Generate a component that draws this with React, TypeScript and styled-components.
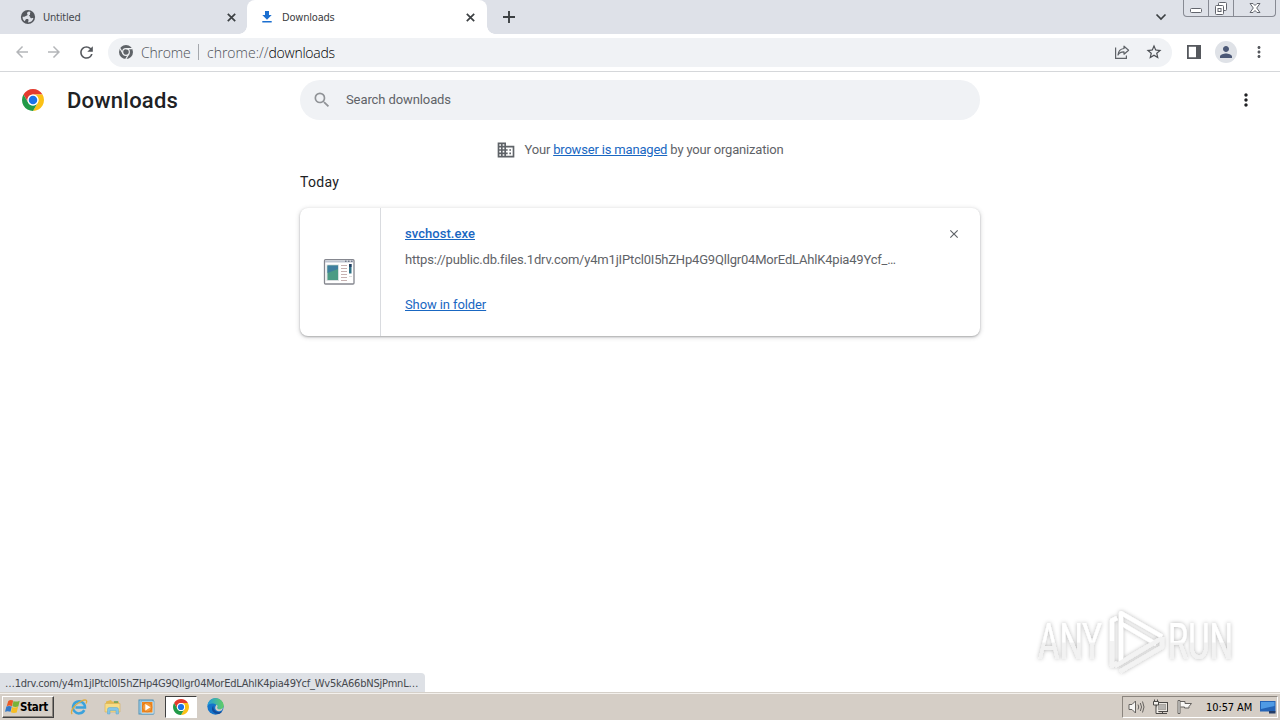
import React from "react";
import styled, { createGlobalStyle } from "styled-components";
import { MdArrowBack, MdArrowForward, MdRefresh, MdStarBorder, MdSearch, MdDomain, MdMoreVert, MdClose, MdPerson } from "react-icons/md";

const UI = `"DejaVu Sans Condensed", "DejaVu Sans", sans-serif`;
const LIGHT = `"Open Sans", sans-serif`;

const GlobalStyle = createGlobalStyle`
  * { box-sizing: border-box; }
  body { margin: 0; background: #fff; overflow: hidden; font-family: Roboto, sans-serif; }
  svg { display: block; flex: none; }
`;

const Screen = styled.div`
  position: relative;
  width: 1280px;
  height: 720px;
  display: flex;
  flex-direction: column;
  background: #fff;
`;

const Text = styled.span<{ $size: number; $color?: string; $spacing?: number; $weight?: number; $font?: string }>`
  font-family: ${(p) => p.$font ?? "Roboto, sans-serif"};
  font-size: ${(p) => p.$size}px;
  font-weight: ${(p) => p.$weight ?? 400};
  letter-spacing: ${(p) => p.$spacing ?? 0}px;
  color: ${(p) => p.$color ?? "#5f6368"};
  white-space: nowrap;
`;

const TabStrip = styled.div`
  height: 34px;
  display: flex;
  align-items: flex-start;
  background: #dee1e8;
`;
const Tab = styled.div<{ $active?: boolean }>`
  position: relative;
  width: ${(p) => (p.$active ? 240 : 247)}px;
  height: 34px;
  display: flex;
  align-items: center;
  padding: 0 ${(p) => (p.$active ? 10 : 9)}px 0 ${(p) => (p.$active ? 12 : 20)}px;
  gap: 7px;
  border-radius: 8px 8px 0 0;
  background: ${(p) => (p.$active ? "#fff" : "transparent")};
  & > svg:last-of-type { margin-left: auto; }
  &::before, &::after {
    content: "";
    display: ${(p) => (p.$active ? "block" : "none")};
    position: absolute;
    bottom: 0;
    width: 8px;
    height: 8px;
  }
  &::before { left: -8px; background: radial-gradient(circle at 0 0, transparent 7.5px, #fff 8px); }
  &::after { right: -8px; background: radial-gradient(circle at 100% 0, transparent 7.5px, #fff 8px); }
`;
const NewTab = styled.div`
  padding: 10px 0 0 15px;
  flex: 1;
`;
const TabSearch = styled.div`
  padding: 13px 16px 0 0;
`;
const WindowControls = styled.div`
  width: 93px;
  height: 17px;
  margin-right: 4px;
  display: flex;
  border: 1px solid #878a93;
  border-top: 0;
  border-radius: 0 0 4px 4px;
`;
const WindowButton = styled.div<{ $width: number }>`
  width: ${(p) => p.$width}px;
  display: flex;
  justify-content: center;
  & + & { border-left: 1px solid #878a93; }
`;

const Toolbar = styled.div`
  height: 38px;
  display: flex;
  align-items: center;
  border-bottom: 1px solid #d5d7da;
  padding: 0 12px 1px 13px;
`;
const NavButtons = styled.div`
  display: flex;
  flex: none;
  gap: 14px;
  width: 95px;
`;
const AddressBar = styled.div`
  flex: 1;
  height: 29px;
  border-radius: 15px;
  background: #f0f2f5;
  display: flex;
  align-items: center;
  padding: 0 9px 0 11px;
`;
const Scheme = styled.div`
  width: 58px;
  padding-left: 8px;
`;
const Separator = styled.div`
  width: 1px;
  height: 16px;
  margin: 0 8px 0 7px;
  background: #a5a8ad;
`;
const AddressText = styled.div`
  flex: 1;
  display: flex;
`;
const AddressActions = styled.div`
  display: flex;
  gap: 15px;
  align-items: center;
`;
const ToolbarActions = styled.div`
  display: flex;
  align-items: center;
  padding-left: 15px;
  gap: 14px;
`;
const Avatar = styled.div`
  width: 22px;
  height: 22px;
  border-radius: 50%;
  background: #dfe2e7;
  display: grid;
  place-items: center;
`;
const Overflow = styled.div`
  margin-left: -1px;
  width: 18px;
`;

const Page = styled.main`
  flex: 1;
  display: flex;
  flex-direction: column;
`;
const PageHeader = styled.header`
  height: 56px;
  display: flex;
  align-items: center;
  padding: 0 24px 0 22px;
`;
const Brand = styled.div`
  width: 278px;
  display: flex;
  align-items: center;
  gap: 23px;
`;
const SearchField = styled.div`
  width: 680px;
  height: 40px;
  border-radius: 20px;
  background: #f0f2f5;
  display: flex;
  align-items: center;
  padding-left: 12px;
  gap: 14px;
  & > span { padding-bottom: 2px; }
`;
const HeaderMenu = styled.div`
  margin-left: auto;
`;
const Column = styled.div`
  width: 680px;
  margin: 0 auto;
`;
const ManagedNote = styled.div`
  height: 44px;
  display: flex;
  justify-content: center;
  align-items: center;
  gap: 8px;
  & > span { padding-bottom: 2px; }
`;
const Link = styled.a<{ $bold?: boolean; $spacing?: number }>`
  font-size: 13px;
  letter-spacing: ${(p) => p.$spacing ?? 0}px;
  font-weight: ${(p) => (p.$bold ? 500 : 400)};
  color: #1967c2;
  text-decoration: underline;
`;
const DateHeading = styled.div`
  height: 36px;
  line-height: 20px;
`;
const Card = styled.section`
  height: 128px;
  display: flex;
  border-radius: 8px;
  background: #fff;
  box-shadow: 0 1px 2px rgba(60, 64, 67, 0.35), 0 1px 4px 1px rgba(60, 64, 67, 0.16);
`;
const FileIcon = styled.div`
  width: 81px;
  border-right: 1px solid #d9dbdf;
  display: grid;
  place-items: center;
  padding-right: 2px;
`;
const Details = styled.div`
  flex: 1;
  padding: 15px 19px 0 24px;
`;
const FileRow = styled.div`
  height: 20px;
  display: flex;
  justify-content: space-between;
  align-items: center;
  & > svg { margin-top: 2px; }
`;
const UrlRow = styled.div`
  height: 32px;
  display: flex;
  align-items: center;
`;
const ActionRow = styled.div`
  height: 58px;
  display: flex;
  align-items: center;
`;

const StatusBubble = styled.div`
  position: absolute;
  left: 0;
  top: 673px;
  width: 425px;
  height: 19px;
  padding-left: 5px;
  line-height: 17px;
  background: #dee1e6;
  border-top-right-radius: 4px;
`;
const Watermark = styled.div`
  position: absolute;
  left: 1030px;
  top: 602px;
`;

const Taskbar = styled.footer`
  height: 28px;
  display: flex;
  align-items: center;
  background: #d5cec6;
  border-top: 1px solid #d5d0c9;
  box-shadow: inset 0 1px 0 #f4f1ed;
  padding: 2px 2px 2px;
`;
const StartButton = styled.div`
  width: 52px;
  height: 22px;
  display: flex;
  align-items: center;
  padding-left: 2px;
  border: 1px solid;
  border-color: #fff #404040 #404040 #fff;
  box-shadow: inset -1px -1px 0 #8b857e;
`;
const Launchers = styled.div`
  display: flex;
  flex: 1;
  align-items: center;
  padding-left: 9px;
  gap: 2px;
`;
const Launcher = styled.div<{ $active?: boolean }>`
  width: 32px;
  height: 22px;
  display: grid;
  place-items: center;
  border: 1px solid;
  border-color: ${(p) => (p.$active ? "#404040 #fff #fff #404040" : "transparent")};
  background: ${(p) => (p.$active ? "#fff" : "transparent")};
`;
const Tray = styled.div`
  width: 156px;
  height: 22px;
  display: flex;
  align-items: center;
  padding-left: 5px;
  border: 1px solid;
  border-color: #8b857e #fff #fff #8b857e;
`;
const TrayIcons = styled.div`
  display: flex;
  gap: 7px;
  width: 78px;
`;
const Clock = styled.div`
  width: 54px;
  padding-bottom: 3px;
`;

const ChromeLogo = ({ size }: { size: number }) => (
  <svg width={size} height={size} viewBox="0 0 48 48">
    <path fill="#e33b2e" d="M3.22 12A24 24 0 0 1 44.78 12H24A12 12 0 0 0 13.61 30Z" />
    <path fill="#fbc116" d="M44.78 12A24 24 0 0 1 24 48L34.39 30A12 12 0 0 0 24 12Z" />
    <path fill="#229a48" d="M3.22 12A24 24 0 0 0 24 48L34.39 30A12 12 0 0 1 13.61 30Z" />
    <circle cx="24" cy="24" r="12" fill="#fff" />
    <circle cx="24" cy="24" r="9.3" fill="#1a73e8" />
  </svg>
);

const ChromeMono = () => (
  <svg width="14" height="14" viewBox="0 0 48 48">
    <circle cx="24" cy="24" r="24" fill="#5f6368" />
    <g stroke="#f0f2f4" strokeWidth="4" fill="none">
      <path d="M24 12.5H46M34 30L23 49M14 30L3 11" />
      <circle cx="24" cy="24" r="11.5" />
    </g>
  </svg>
);

const GlobeGlyph = () => (
  <svg width="16" height="16" viewBox="0 0 16 16">
    <circle cx="8" cy="8" r="7.1" fill="#55585e" />
    <path d="M9.500 2.500C7.200 2.700 6.600 4 7.300 5 8 6 7.200 6.600 6.300 6.800 5.500 7 5.300 7.700 4.300 7.700H2.600c-.2 1.600.6 3.400 2 4.500C5.600 11.700 5 10.600 6 10.200c1.500-.4 2.700 0 2.500 1.200-.1.800-.5 1.200-.5 2.100C11 13.400 13 11.500 13.400 9 12.300 8.800 11.600 9.500 10.700 9 9.800 8.400 10.500 7.300 9.600 7.200 8.700 7.100 8.800 6.500 9.500 6.200 10.800 5.800 9.300 4.500 10.500 3.600Z" fill="#dee1e8" />
  </svg>
);

const TabClose = () => (
  <svg width="13" height="13" viewBox="0 0 13 13">
    <path d="M2.800 2.800L10.200 10.200M10.200 2.800L2.800 10.200" stroke="#3c4043" strokeWidth="1.700" />
  </svg>
);

const PlusGlyph = () => (
  <svg width="14" height="14" viewBox="0 0 14 14">
    <path d="M1 7H13M7 1V13" stroke="#3c4043" strokeWidth="1.900" />
  </svg>
);

const DownloadGlyph = () => (
  <svg width="16" height="16" viewBox="0 0 16 16" fill="#1b6fd0">
    <path d="M6 2h4v4h2.700L8 10.700 3.300 6H6zM3.300 12h9.400v1.500H3.300z" />
  </svg>
);

const ShareGlyph = () => (
  <svg width="16" height="16" viewBox="0 0 16 16" fill="none" stroke="#5f6368" strokeWidth="1.2">
    <path d="M1.6 3.500V14.400H12.400V11.500" />
    <path d="M10 2.200L14.600 6.200 10 10.200V7.900C7.200 7.800 5.200 8.800 4 11 4.300 7.400 6.500 4.900 10 4.500Z" strokeLinejoin="round" />
  </svg>
);

const SidePanelGlyph = () => (
  <svg width="14" height="14" viewBox="0 0 14 14">
    <path d="M.9.9H13.1V13.1H.9Z" fill="none" stroke="#55585d" strokeWidth="1.8" />
    <path d="M9 0H14V14H9Z" fill="#55585d" />
  </svg>
);

const WindowFile = () => (
  <svg width="32" height="26" viewBox="0 0 32 26">
    <rect x="1.500" y=".7" width="29.500" height="24.300" rx="1" fill="#fff" stroke="#85878f" strokeWidth="1.300" />
    <path d="M2 1.500H30V3.500H2Z" fill="#bfc5d1" />
    <path d="M22 2.200h1.500M25 2.200h1.500M28 2.200h1.500" stroke="#555d70" />
    <rect x="3.500" y="5.500" width="12.500" height="16.500" fill="#d8dedf" />
    <rect x="4.500" y="6.500" width="10.500" height="14.500" fill="#4c9b84" />
    <path d="M4.500 6.500H15V10L4.500 14Z" fill="#3e7e9f" />
    <path d="M18 6.500h6M18 9.500h6M18 12.500h6M18 15.500h6M18 18.500h6M18 21.500h6" stroke="#c6b1b1" />
    <rect x="26" y="5" width="2.500" height="9.500" fill="#2e7186" />
    <path d="M26 5h2.500v3H26Z" fill="#263e63" />
    <path d="M26 17.500h3" stroke="#dcdcdc" />
  </svg>
);

const WindowsFlag = () => (
  <svg width="15" height="15" viewBox="0 0 16 16">
    <path d="M3.500 2Q6 .2 8.700 1.700L7.500 7.600Q4.600 6 1.800 7.600Z" fill="#ea5a24" />
    <path d="M9.100 2.200Q12 3.500 15.700 1.800L14.200 7.900Q10.800 9 7.900 7.700Z" fill="#78b338" />
    <path d="M1.500 8.100Q4.200 6.900 7.200 8.100L5.900 13.700Q3 12.300 0 13.600Z" fill="#3479c7" />
    <path d="M7.600 8.400Q10.500 9.700 13.900 8.300L12.500 14.400Q9.200 15.500 6.300 14.200Z" fill="#f6bd23" />
  </svg>
);

const ExplorerE = () => (
  <svg width="18" height="18" viewBox="0 0 18 18" fill="none">
    <path d="M14.300 12.200A6 6 0 1 1 15 9.600H5.500" stroke="#3ba2dc" strokeWidth="2.500" />
    <path d="M5 9A4.500 4.500 0 0 1 13 7" stroke="#7bccf0" strokeWidth="1" />
    <path d="M2.200 16.200C-.5 13 5 6.500 11 3.300 15.500.9 18 2 16 5.500" stroke="#dfac3f" strokeWidth="1.300" />
  </svg>
);

const FolderGlyph = () => (
  <svg width="18" height="18" viewBox="0 0 18 18">
    <path d="M2 3.500L7 2l1 1.500h7V7H2Z" fill="#e2b850" />
    <path d="M1 5.500H16V14H1Z" fill="#f7dc85" stroke="#d6b057" strokeWidth=".6" />
    <path d="M10 4h4" stroke="#4f9c58" strokeWidth="1.300" />
    <path d="M3.500 16V11.500Q3.500 9.500 5.500 9.500h7q2 0 2 2V16h-2.500v-3.500h-6V16Z" fill="#83c5e6" stroke="#5aa6ce" strokeWidth=".5" />
  </svg>
);

const MediaGlyph = () => (
  <svg width="18" height="18" viewBox="0 0 18 18">
    <rect x="1" y="2" width="14" height="14" fill="#aed8ee" stroke="#4d8fb5" />
    <path d="M3 3h13v13H3Z" fill="#d5eaf4" stroke="#5a9cc1" strokeWidth=".7" />
    <path d="M4 4h10.500v10.500H4Z" fill="#f0861b" />
    <circle cx="9.200" cy="9.200" r="4.700" fill="#f49b38" stroke="#d46b16" strokeWidth=".6" />
    <path d="M7.300 6V12.400L12.500 9.200Z" fill="#fff" />
  </svg>
);

const EdgeGlyph = () => (
  <svg width="17" height="17" viewBox="0 0 24 24">
    <defs>
      <linearGradient id="edgeTop" x1="0" x2="1">
        <stop offset="0" stopColor="#229cde" />
        <stop offset="1" stopColor="#61cf63" />
      </linearGradient>
    </defs>
    <circle cx="12" cy="12" r="11.500" fill="#1474ca" />
    <path d="M.6 11C2-3.500 22-2.500 23.500 10c.4 4-2.300 6-5.500 6-3.500 0-4.500-1.300-3.300-2.600C16 9 5.500 4.500.6 11Z" fill="url(#edgeTop)" />
    <path d="M9 10.500C4 16 9 23 16.500 22.600c2.200-.7 4-2 5-4-7 3.500-13.500-1.600-12.500-8.100Z" fill="#124c9b" />
    <path d="M13.500 9.700c2.200 1.500 1.500 3 .9 4 .1 2.800 5.700 3.200 8.300.2-1 3-2.500 4.500-4.200 4.600-6 1.500-9.200-4.500-5-8.800Z" fill="#d5cec6" />
  </svg>
);

const SpeakerGlyph = () => (
  <svg width="17" height="16" viewBox="0 0 17 16" fill="none" stroke="#65625f">
    <path d="M1 5.500h3L7.500 2v12L4 10.500H1Z" fill="#f7f6f4" />
    <path d="M10 5.500q1.500 2.500 0 5M12.300 4q2.500 4 0 8M14.500 2.500q3 5.500 0 11" />
  </svg>
);

const NetworkGlyph = () => (
  <svg width="17" height="16" viewBox="0 0 17 16" fill="none" stroke="#4b4947">
    <rect x="4.500" y="3.500" width="11" height="9" fill="#e9e6e1" />
    <rect x="6.500" y="5.500" width="7" height="5" fill="#b5b3b0" stroke="#aaa6a1" />
    <path d="M7 14.500h8M10.500 12.500v2" />
    <path d="M1.500 2.500h5v3.500h-5ZM2.500.5v2M5.500.5v2M4 6v8.500h3" fill="#f4f1ed" />
  </svg>
);

const FlagGlyph = () => (
  <svg width="17" height="16" viewBox="0 0 17 16" fill="none" stroke="#65625f">
    <path d="M4 2.500h5v2h6.500l-2.500 3 0 1.500H8.500V8h-4" fill="#f9f8f6" />
    <path d="M2 1.500h2v13H2Z" fill="#f9f8f6" />
  </svg>
);

const DesktopGlyph = () => (
  <svg width="16" height="16" viewBox="0 0 16 16">
    <path d="M0 2H15.500V12.500H0Z" fill="#2464b6" />
    <path d="M1 3H14.500V7L1 10Z" fill="#4f9be5" />
    <path d="M9 12h6.500v2.500H9Z" fill="#233c67" />
  </svg>
);

const AnyRunMark = () => (
  <svg width="250" height="76" viewBox="0 0 250 76">
    <defs>
      <filter id="halo" x="-10%" y="-15%" width="120%" height="130%">
        <feDropShadow dx="0" dy="0" stdDeviation="1.900" floodColor="#000" floodOpacity=".3" />
      </filter>
      <linearGradient id="letter" x1="0" y1="0" x2="0" y2="1">
        <stop offset=".5" stopColor="#fff" />
        <stop offset=".52" stopColor="#f2f2f2" />
      </linearGradient>
    </defs>
    <g filter="url(#halo)">
      <g fontFamily="Roboto, sans-serif" fontSize="50" fontWeight="400" fill="url(#letter)">
        <text x="8" y="57" textLength="64" lengthAdjust="spacingAndGlyphs">ANY</text>
        <text x="138" y="57" textLength="65" lengthAdjust="spacingAndGlyphs">RUN</text>
      </g>
      <g fill="none" strokeWidth="4.200" strokeLinejoin="round">
        <path d="M82 39V63.500L87 61" stroke="#f3f3f3" />
        <path d="M82 39V18.500L87 16" stroke="#fff" />
        <path d="M91 59V11L132 34.500" stroke="#fff" />
        <path d="M92 22L126 42" stroke="#fff" />
        <path d="M85 64L132 36M90 69.500L132 45V35" stroke="#f3f3f3" />
      </g>
    </g>
  </svg>
);

export default function App() {
  return (
    <Screen>
      <GlobalStyle />
      <TabStrip>
        <Tab>
          <GlobeGlyph />
          <Text $size={11} $font={UI} $color="#45484d" $spacing={-0.2}>Untitled</Text>
          <TabClose />
        </Tab>
        <Tab $active>
          <DownloadGlyph />
          <Text $size={11} $font={UI} $color="#3c4043" $spacing={-0.2}>Downloads</Text>
          <TabClose />
        </Tab>
        <NewTab><PlusGlyph /></NewTab>
        <TabSearch>
          <svg width="12" height="8" viewBox="0 0 12 8"><path d="M1.500 1.500L6 6l4.500-4.500" fill="none" stroke="#3c4043" strokeWidth="1.700" /></svg>
        </TabSearch>
        <WindowControls>
          <WindowButton $width={24}>
            <svg width="14" height="16" viewBox="0 0 14 16"><rect x="1.500" y="8.500" width="11" height="4" rx="1" fill="#fff" stroke="#62656d" /></svg>
          </WindowButton>
          <WindowButton $width={25}>
            <svg width="14" height="16" viewBox="0 0 14 16" fill="#fff" stroke="#62656d"><rect x="4.500" y="2.500" width="8" height="8" rx="1" /><rect x="1.500" y="5.500" width="8" height="9" rx="1" /><rect x="4" y="8.500" width="3" height="3" /></svg>
          </WindowButton>
          <WindowButton $width={42}>
            <svg width="14" height="16" viewBox="0 0 14 16"><path d="M2 3.500h3l2 2L9 3.500h3L8.700 8 12 12.500H9l-2-2-2 2H2L5.300 8Z" fill="#fff" stroke="#62656d" /></svg>
          </WindowButton>
        </WindowControls>
      </TabStrip>
      <Toolbar>
        <NavButtons>
          <MdArrowBack size={18} color="#b4b6b9" />
          <MdArrowForward size={18} color="#b4b6b9" />
          <MdRefresh size={19} color="#55585d" />
        </NavButtons>
        <AddressBar>
          <ChromeMono />
          <Scheme><Text $size={14} $font={LIGHT} $weight={300} $color="#4d5157" $spacing={-0.2}>Chrome</Text></Scheme>
          <Separator />
          <AddressText>
            <Text $size={14} $font={LIGHT} $weight={300} $color="#4d5157">chrome://</Text>
            <Text $size={14} $font={LIGHT} $weight={300} $color="#000" $spacing={-0.25}>downloads</Text>
          </AddressText>
          <AddressActions><ShareGlyph /><MdStarBorder size={18} color="#4b4e53" /></AddressActions>
        </AddressBar>
        <ToolbarActions>
          <SidePanelGlyph />
          <Avatar><MdPerson size={18} color="#4b5876" /></Avatar>
          <Overflow><MdMoreVert size={18} color="#55585d" /></Overflow>
        </ToolbarActions>
      </Toolbar>
      <Page>
        <PageHeader>
          <Brand>
            <ChromeLogo size={22} />
            <Text $size={22} $weight={500} $color="#202124" $spacing={0.22}>Downloads</Text>
          </Brand>
          <SearchField>
            <MdSearch size={20} color="#909397" />
            <Text $size={13} $spacing={-0.1}>Search downloads</Text>
          </SearchField>
          <HeaderMenu><MdMoreVert size={20} color="#202124" /></HeaderMenu>
        </PageHeader>
        <Column>
          <ManagedNote>
            <MdDomain size={20} color="#5f6368" />
            <Text $size={13} $spacing={-0.18}>Your <Link $spacing={-0.18}>browser is managed</Link> by your organization</Text>
          </ManagedNote>
          <DateHeading><Text $size={14} $spacing={0.3} $color="#202124">Today</Text></DateHeading>
          <Card>
            <FileIcon><WindowFile /></FileIcon>
            <Details>
              <FileRow>
                <Link $bold $spacing={0.05}>svchost.exe</Link>
                <MdClose size={14} color="#5f6368" />
              </FileRow>
              <UrlRow><Text $size={13} $spacing={-0.19}>https://public.db.files.1drv.com/y4m1jIPtcl0I5hZHp4G9Qllgr04MorEdLAhlK4pia49Ycf_…</Text></UrlRow>
              <ActionRow><Link $spacing={-0.1}>Show in folder</Link></ActionRow>
            </Details>
          </Card>
        </Column>
      </Page>
      <Taskbar>
        <StartButton>
          <WindowsFlag />
          <Text $size={11.5} $font={UI} $weight={700} $color="#000" $spacing={-0.3}>Start</Text>
        </StartButton>
        <Launchers>
          <Launcher><ExplorerE /></Launcher>
          <Launcher><FolderGlyph /></Launcher>
          <Launcher><MediaGlyph /></Launcher>
          <Launcher $active><ChromeLogo size={16} /></Launcher>
          <Launcher><EdgeGlyph /></Launcher>
        </Launchers>
        <Tray>
          <TrayIcons><SpeakerGlyph /><NetworkGlyph /><FlagGlyph /></TrayIcons>
          <Clock><Text $size={11} $font={UI} $color="#000" $spacing={-0.1}>10:57 AM</Text></Clock>
          <DesktopGlyph />
        </Tray>
      </Taskbar>
      <StatusBubble>
        <Text $size={11} $font={UI} $color="#45484d" $spacing={-0.23}>…1drv.com/y4m1jIPtcl0I5hZHp4G9Qllgr04MorEdLAhlK4pia49Ycf_Wv5kA66bNSjPmnL…</Text>
      </StatusBubble>
      <Watermark><AnyRunMark /></Watermark>
    </Screen>
  );
}
